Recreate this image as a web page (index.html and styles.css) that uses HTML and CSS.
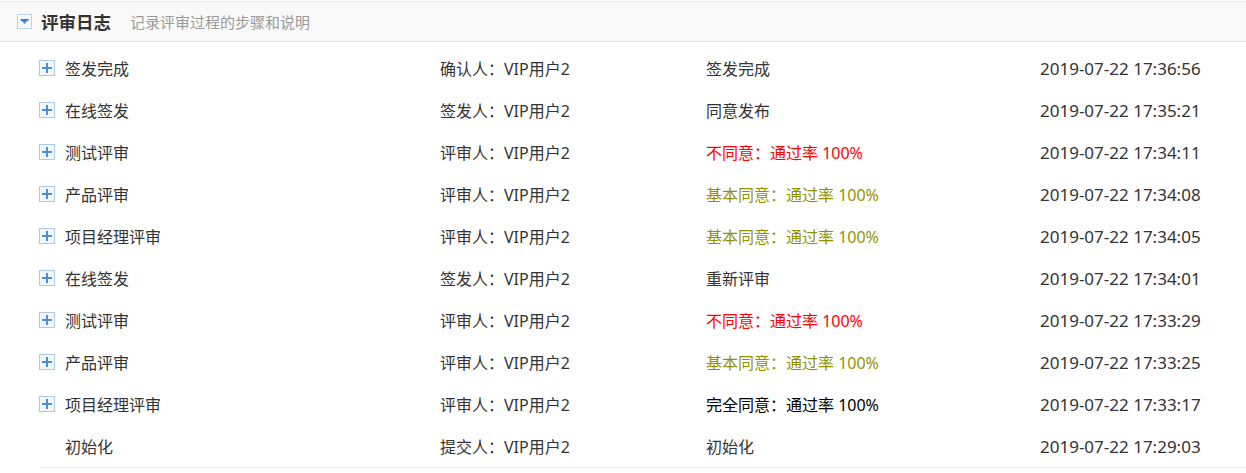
FILE: index.html
```html
<!DOCTYPE html>
<html lang="zh-CN">
<head>
<meta charset="utf-8">
<link rel="stylesheet" href="styles.css">
</head>
<body>
<div class="panel">
  <div class="panel-head">
    <span class="toggle">
      <svg width="15" height="15" viewBox="0 0 15 15"><rect x="0.5" y="0.5" width="14" height="14" fill="#f4f8fc" stroke="#b7d2ec"/><rect x="1.5" y="1.5" width="12" height="12" fill="none" stroke="#ffffff"/><path d="M3.5 5.5 H11.5 L7.5 10 Z" fill="#3f8ad8"/><rect x="3.5" y="5" width="8" height="1.5" fill="#2f7fd4"/></svg>
    </span>
    <span class="title">评审日志</span>
    <span class="subtitle">记录评审过程的步骤和说明</span>
  </div>
  <div class="log">
    <div class="row"><span class="name"><i class="plus"></i>签发完成</span><span class="who">确认人：VIP用户2</span><span class="res">签发完成</span><span class="time">2019-07-22 17:36:56</span></div>
    <div class="row"><span class="name"><i class="plus"></i>在线签发</span><span class="who">签发人：VIP用户2</span><span class="res">同意发布</span><span class="time">2019-07-22 17:35:21</span></div>
    <div class="row"><span class="name"><i class="plus"></i>测试评审</span><span class="who">评审人：VIP用户2</span><span class="res red">不同意：通过率 100%</span><span class="time">2019-07-22 17:34:11</span></div>
    <div class="row"><span class="name"><i class="plus"></i>产品评审</span><span class="who">评审人：VIP用户2</span><span class="res olive">基本同意：通过率 100%</span><span class="time">2019-07-22 17:34:08</span></div>
    <div class="row"><span class="name"><i class="plus"></i>项目经理评审</span><span class="who">评审人：VIP用户2</span><span class="res olive">基本同意：通过率 100%</span><span class="time">2019-07-22 17:34:05</span></div>
    <div class="row"><span class="name"><i class="plus"></i>在线签发</span><span class="who">签发人：VIP用户2</span><span class="res">重新评审</span><span class="time">2019-07-22 17:34:01</span></div>
    <div class="row"><span class="name"><i class="plus"></i>测试评审</span><span class="who">评审人：VIP用户2</span><span class="res red">不同意：通过率 100%</span><span class="time">2019-07-22 17:33:29</span></div>
    <div class="row"><span class="name"><i class="plus"></i>产品评审</span><span class="who">评审人：VIP用户2</span><span class="res olive">基本同意：通过率 100%</span><span class="time">2019-07-22 17:33:25</span></div>
    <div class="row"><span class="name"><i class="plus"></i>项目经理评审</span><span class="who">评审人：VIP用户2</span><span class="res black">完全同意：通过率 100%</span><span class="time">2019-07-22 17:33:17</span></div>
    <div class="row"><span class="name"><i class="noicon"></i>初始化</span><span class="who">提交人：VIP用户2</span><span class="res">初始化</span><span class="time">2019-07-22 17:29:03</span></div>
  </div>
</div>
</body>
</html>
```
FILE: styles.css
```css
html, body {
  margin: 0;
  padding: 0;
  background: #ffffff;
}
body {
  font-family: "Noto Sans", "Noto Sans CJK SC", sans-serif;
  color: #333333;
}
.panel {
  padding-top: 1px;
}
.panel-head {
  height: 39px;
  display: flex;
  align-items: center;
  background: #f9f9f9;
  border-top: 1px solid #e6e6e6;
  border-bottom: 1px solid #e6e6e6;
  padding-left: 17px;
}
.toggle {
  display: flex;
  width: 15px;
  height: 15px;
  margin-right: 9px;
}
.title {
  font-size: 17.5px;
  font-weight: bold;
  color: #333333;
  margin-right: 19px;
}
.subtitle {
  font-size: 15px;
  color: #999999;
}
.log {
  margin-left: 40px;
  padding-top: 5px;
  border-bottom: 1px solid #e8e8e8;
}
.row {
  display: grid;
  grid-template-columns: 400px 266px 334px 1fr;
  height: 42px;
  align-items: center;
  font-size: 16px;
}
.time {
  font-size: 17px;
}
.name {
  display: flex;
  align-items: center;
}
.plus, .noicon {
  display: inline-block;
  width: 16px;
  height: 16px;
  margin-left: -1px;
  margin-right: 10px;
  box-sizing: border-box;
  position: relative;
}
.plus {
  border: 1px solid #a9cbe9;
  background: #f3f8fd;
}
.plus::before, .plus::after {
  content: "";
  position: absolute;
  background: #4a90d9;
}
.plus::before {
  left: 2px;
  top: 6px;
  width: 10px;
  height: 2px;
}
.plus::after {
  left: 6px;
  top: 2px;
  width: 2px;
  height: 10px;
}
.red { color: #ff0000; }
.olive { color: #939300; }
.black { color: #000000; }
```
